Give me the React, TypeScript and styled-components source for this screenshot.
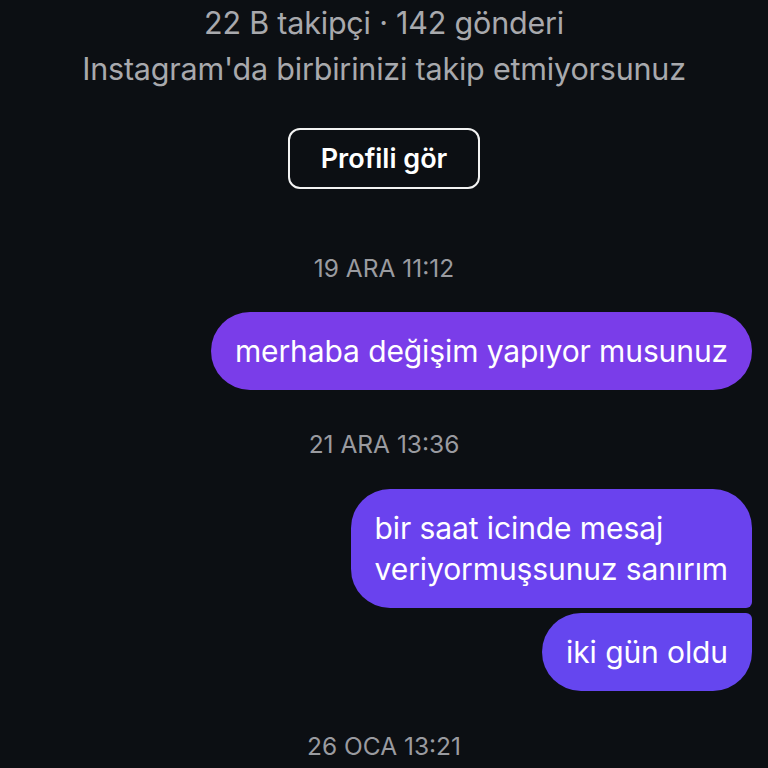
import React from "react";
import styled, { createGlobalStyle } from "styled-components";

const Global = createGlobalStyle`
  html, body { margin: 0; padding: 0; background: #0c0f13; }
  body { font-family: Inter, "Noto Sans", sans-serif; -webkit-font-smoothing: antialiased; }
`;

const Page = styled.div`
  width: 768px;
  height: 768px;
  overflow: hidden;
  background: #0c0f13;
  display: flex;
  flex-direction: column;
  align-items: center;
  box-sizing: border-box;
`;

const Meta = styled.div`
  color: #a8a9ad;
  font-size: 30.5px;
  line-height: 46px;
  text-align: center;
  letter-spacing: -0.2px;
  white-space: nowrap;
`;

const ProfileButton = styled.button`
  margin-top: 36px;
  width: 192px;
  height: 61px;
  border: 2px solid #f2f2f2;
  border-radius: 12px;
  background: transparent;
  color: #ffffff;
  font-family: Inter, sans-serif;
  font-weight: 600;
  font-size: 27px;
  display: flex;
  align-items: center;
  justify-content: center;
  padding: 0;
`;

const Stamp = styled.div<{ $mt: number }>`
  margin-top: ${(p) => p.$mt}px;
  color: #9a9ba0;
  font-size: 24.5px;
  line-height: 30px;
  text-align: center;
`;

const Thread = styled.div<{ $mt: number }>`
  margin-top: ${(p) => p.$mt}px;
  align-self: stretch;
  display: flex;
  flex-direction: column;
  align-items: flex-end;
  gap: 5px;
  padding-right: 16px;
`;

const Bubble = styled.div<{ $bg: string; $radius: string }>`
  background: ${(p) => p.$bg};
  border-radius: ${(p) => p.$radius};
  color: #ffffff;
  font-size: 30px;
  line-height: 41px;
  padding: 19px 24px 18px 24px;
  letter-spacing: -0.1px;
  white-space: nowrap;
`;

export default function App() {
  return (
    <>
      <Global />
      <Page>
        <Meta>22 B takipçi · 142 gönderi</Meta>
        <Meta>Instagram'da birbirinizi takip etmiyorsunuz</Meta>
        <ProfileButton>Profili gör</ProfileButton>
        <Stamp $mt={64}>19 ARA 11:12</Stamp>
        <Thread $mt={29}>
          <Bubble $bg="#7a3de9" $radius="39px">merhaba değişim yapıyor musunuz</Bubble>
        </Thread>
        <Stamp $mt={39}>21 ARA 13:36</Stamp>
        <Thread $mt={30}>
          <Bubble $bg="#6a42ee" $radius="39px 39px 6px 39px">
            bir saat icinde mesaj
            <br />
            veriyormuşsunuz sanırım
          </Bubble>
          <Bubble $bg="#6546ef" $radius="39px 6px 39px 39px">iki gün oldu</Bubble>
        </Thread>
        <Stamp $mt={40}>26 OCA 13:21</Stamp>
      </Page>
    </>
  );
}
